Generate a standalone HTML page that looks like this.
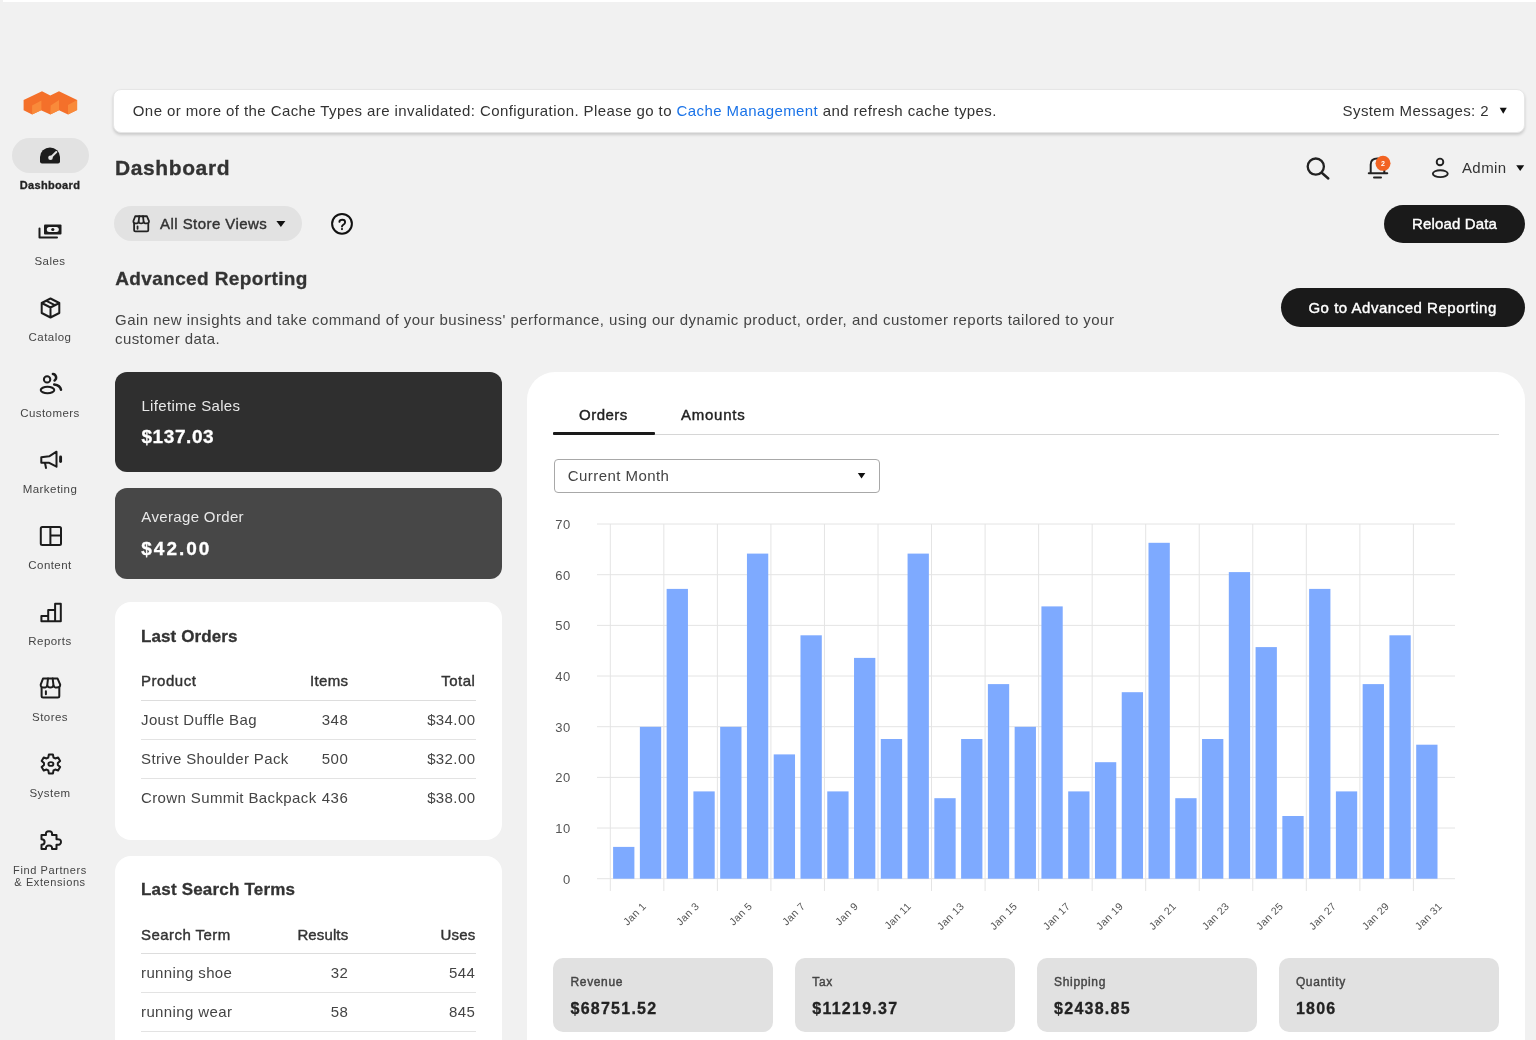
<!DOCTYPE html>
<html><head><meta charset="utf-8"><title>Dashboard</title>
<style>
html,body{margin:0;padding:0;}
body{width:1536px;height:1040px;overflow:hidden;position:relative;background:#f1f1f1;font-family:"Liberation Sans", sans-serif;}
.t{position:absolute;white-space:nowrap;}
#w{position:absolute;left:0;top:0;width:1536px;height:1040px;will-change:transform;}
.b{position:absolute;}
</style></head><body><div id="w">
<div class="b" style="left:3px;top:0px;width:1533px;height:2px;background:#ffffff;border-radius:0px;"></div>
<svg class="b" style="left:0px;top:0px;" width="100" height="130" viewBox="0 0 100 130">
<polygon fill="#f4702a" points="23.6,100.1 42,91.2 50.3,95.5 59,91.2 77.1,100.1 77.1,110 68,114.5 59,110.2 50.3,114.5 41,110.2 32.1,114.5 23.6,110.2"/>
<polygon fill="#f98a3a" points="32.1,105.4 41.4,100.5 41.4,110.2 32.1,114.5"/>
<polygon fill="#f98a3a" points="50.7,105.4 59,100.1 59,110.2 50.3,114.5"/>
<polygon fill="#f98a3a" points="68,105 77.1,100.1 77.1,110 68,114.5"/>
</svg>
<div class="b" style="left:12px;top:138px;width:77px;height:35px;background:#e2e2e2;border-radius:17.5px;"></div>
<svg class="b" style="left:0px;top:130px;" width="100" height="50" viewBox="0 0 100 50">
<path fill="#1c1c1c" d="M40,27 A10,9.5 0 0 1 60,27 L60,31.5 Q60,33.5 58,33.5 L42,33.5 Q40,33.5 40,31.5 Z"/>
<line x1="50.5" y1="27.8" x2="56.3" y2="22" stroke="#e2e2e2" stroke-width="2" stroke-linecap="round"/>
<circle cx="50.5" cy="27.8" r="2.3" fill="#e2e2e2"/>
</svg>
<div class="t" style="left:-250px;width:600px;text-align:center;top:179.69px;font-size:11px;line-height:11px;font-weight:700;color:#222;letter-spacing:0.33px;-webkit-text-stroke:0.3px #222;">Dashboard</div>
<div class="t" style="left:-250px;width:600px;text-align:center;top:256.07px;font-size:11.5px;line-height:11.5px;font-weight:400;color:#444;letter-spacing:0.45px;">Sales</div>
<div class="t" style="left:-250px;width:600px;text-align:center;top:332.07px;font-size:11.5px;line-height:11.5px;font-weight:400;color:#444;letter-spacing:0.45px;">Catalog</div>
<div class="t" style="left:-250px;width:600px;text-align:center;top:408.07px;font-size:11.5px;line-height:11.5px;font-weight:400;color:#444;letter-spacing:0.45px;">Customers</div>
<div class="t" style="left:-250px;width:600px;text-align:center;top:484.07px;font-size:11.5px;line-height:11.5px;font-weight:400;color:#444;letter-spacing:0.45px;">Marketing</div>
<div class="t" style="left:-250px;width:600px;text-align:center;top:560.07px;font-size:11.5px;line-height:11.5px;font-weight:400;color:#444;letter-spacing:0.45px;">Content</div>
<div class="t" style="left:-250px;width:600px;text-align:center;top:636.07px;font-size:11.5px;line-height:11.5px;font-weight:400;color:#444;letter-spacing:0.45px;">Reports</div>
<div class="t" style="left:-250px;width:600px;text-align:center;top:712.07px;font-size:11.5px;line-height:11.5px;font-weight:400;color:#444;letter-spacing:0.45px;">Stores</div>
<div class="t" style="left:-250px;width:600px;text-align:center;top:788.07px;font-size:11.5px;line-height:11.5px;font-weight:400;color:#444;letter-spacing:0.45px;">System</div>
<div class="t" style="left:-250px;width:600px;text-align:center;top:865.19px;font-size:11px;line-height:11px;font-weight:400;color:#444;letter-spacing:0.6px;">Find Partners</div>
<div class="t" style="left:-250px;width:600px;text-align:center;top:877.49px;font-size:11px;line-height:11px;font-weight:400;color:#444;letter-spacing:0.6px;">&amp; Extensions</div>
<svg class="b" style="left:30px;top:215px;" width="40" height="30" viewBox="0 0 40 30">
<rect x="14" y="9.5" width="17.5" height="10" rx="1" fill="#1c1c1c"/>
<rect x="16.8" y="12" width="12" height="5" rx="2.5" fill="#f1f1f1"/>
<circle cx="22.8" cy="14.5" r="1.6" fill="#1c1c1c"/>
<path d="M9.5,13.5 V22.5 H27" fill="none" stroke="#1c1c1c" stroke-width="2" stroke-linejoin="round" stroke-linecap="round"/>
</svg>
<svg class="b" style="left:30px;top:290px;" width="40" height="35" viewBox="0 0 40 35">
<path d="M20.5,8.5 L29.3,13 V23 L20.5,27.5 L11.7,23 V13 Z M11.7,13 L20.5,17.5 L29.3,13 M20.5,17.5 V27.5 M16,10.7 L24.8,15.2" fill="none" stroke="#1c1c1c" stroke-width="2" stroke-linejoin="round" stroke-linecap="round"/>
</svg>
<svg class="b" style="left:30px;top:360px;" width="40" height="40" viewBox="0 0 40 40">
<circle cx="17.1" cy="19.4" r="3.2" fill="none" stroke="#1c1c1c" stroke-width="2" stroke-linejoin="round" stroke-linecap="round"/>
<ellipse cx="17.5" cy="30" rx="6.8" ry="3.2" fill="none" stroke="#1c1c1c" stroke-width="2" stroke-linejoin="round" stroke-linecap="round"/>
<path d="M22.9,13.9 A3.6,3.6 0 0 1 24.6,20.4" fill="none" stroke="#1c1c1c" stroke-width="2.5" stroke-linecap="round"/>
<path d="M24.2,24.4 Q30.3,25.2 31,29.8" fill="none" stroke="#1c1c1c" stroke-width="2.5" stroke-linecap="round"/>
</svg>
<svg class="b" style="left:30px;top:440px;" width="40" height="35" viewBox="0 0 40 35">
<path d="M11.3,23.7 V29.3 H19.2 L26.5,33.2 V18.2 L19.2,22.8 Z" fill="none" stroke="#1c1c1c" stroke-width="2" stroke-linejoin="round" stroke-linecap="round" transform="translate(0,-6.5)"/>
<path d="M15,23 L16,28" fill="none" stroke="#1c1c1c" stroke-width="2" stroke-linejoin="round" stroke-linecap="round"/>
<path d="M30.6,16.9 V21.5" fill="none" stroke="#1c1c1c" stroke-width="2.9" stroke-linecap="round"/>
</svg>
<svg class="b" style="left:30px;top:515px;" width="40" height="40" viewBox="0 0 40 40">
<rect x="10.8" y="12" width="20.2" height="18" rx="1.5" fill="none" stroke="#1c1c1c" stroke-width="2" stroke-linejoin="round" stroke-linecap="round"/>
<path d="M20.4,12 V30 M20.4,20.5 H31" fill="none" stroke="#1c1c1c" stroke-width="2" stroke-linejoin="round" stroke-linecap="round"/>
</svg>
<svg class="b" style="left:30px;top:595px;" width="40" height="35" viewBox="0 0 40 35">
<path d="M11.4,26.3 V20.9 H18.2 V15.1 H25.1 V8.7 H30.8 V26.3 Z M18.2,20.9 V26.3 M25.1,15.1 V26.3" fill="none" stroke="#1c1c1c" stroke-width="2" stroke-linejoin="round" stroke-linecap="round"/>
</svg>
<svg class="b" style="left:30px;top:670px;" width="40" height="35" viewBox="0 0 40 35">
<path d="M13,8.6 H27.6 L30.2,14.6 Q30.4,17.6 26.9,17.6 Q23.9,17.6 23.5,15.6 Q23,17.6 20.35,17.6 Q17.7,17.6 17.2,15.6 Q16.8,17.6 13.8,17.6 Q10.5,17.6 10.7,14.6 Z" fill="none" stroke="#1c1c1c" stroke-width="2" stroke-linejoin="round" stroke-linecap="round"/>
<path d="M17.2,15.6 L18,8.6 M23.5,15.6 L22.7,8.6 M11.6,17.5 V26 Q11.6,27.5 13.1,27.5 H27.8 Q29.3,27.5 29.3,26 V17.5 M15.9,21.2 V24.3" fill="none" stroke="#1c1c1c" stroke-width="2" stroke-linejoin="round" stroke-linecap="round"/>
</svg>
<svg class="b" style="left:30px;top:745px;" width="40" height="40" viewBox="0 0 40 40"><g transform="translate(20.9,19)"><path fill="none" stroke="#1c1c1c" stroke-width="2" stroke-linejoin="round" d="M2.62,-6.49 L2.02,-9.49 L-2.02,-9.49 L-2.62,-6.49 L-4.31,-5.52 L-7.21,-6.49 L-9.23,-3.00 L-6.93,-0.97 L-6.93,0.97 L-9.23,3.00 L-7.21,6.49 L-4.31,5.52 L-2.62,6.49 L-2.02,9.49 L2.02,9.49 L2.62,6.49 L4.31,5.52 L7.21,6.49 L9.23,3.00 L6.93,0.97 L6.93,-0.97 L9.23,-3.00 L7.21,-6.49 L4.31,-5.52 Z"/><ellipse rx="2.5" ry="1.9" fill="none" stroke="#1c1c1c" stroke-width="1.9"/></g></svg>
<svg class="b" style="left:30px;top:820px;" width="40" height="40" viewBox="0 0 40 40">
<path d="M11.5,15 H16 Q15.3,11.2 19,11.2 Q22.7,11.2 22,15 H26.5 V19.3 Q31,18.8 31,22 Q31,25.2 26.5,24.7 V29 H22 Q22.5,25.5 19,25.5 Q15.5,25.5 16,29 H11.5 V24.7 Q14.6,24.7 14.6,22 Q14.6,19.3 11.5,19.3 Z" fill="none" stroke="#1c1c1c" stroke-width="2" stroke-linejoin="round" stroke-linecap="round"/>
</svg>
<div class="b" style="left:113px;top:88.5px;width:1412px;height:44px;background:#ffffff;border-radius:8px;box-shadow:0 2px 3px rgba(0,0,0,0.16);border:1px solid #e6e6e6;box-sizing:border-box;"></div>
<div class="t" style="left:132.8px;top:103.00px;font-size:15px;line-height:15px;font-weight:400;color:#333;letter-spacing:0.41px;">One or more of the Cache Types are invalidated: Configuration. Please go to <span style="color:#1a73e8">Cache Management</span> and refresh cache types.</div>
<div class="t" style="right:47px;text-align:right;top:102.90px;font-size:15px;line-height:15px;font-weight:400;color:#333;letter-spacing:0.4px;">System Messages: 2</div>
<svg class="b" style="left:1498px;top:105px;" width="12" height="12" viewBox="0 0 12 12"><polygon points="1.7,2.8 8.8,2.8 5.25,8.8" fill="#111"/></svg>
<div class="t" style="left:115px;top:157.22px;font-size:21px;line-height:21px;font-weight:700;color:#333;letter-spacing:0.6px;-webkit-text-stroke:0.3px #333;">Dashboard</div>
<svg class="b" style="left:1300px;top:150px;" width="36" height="36" viewBox="0 0 36 36"><circle cx="15.8" cy="16.6" r="8.1" fill="none" stroke="#222" stroke-width="2.3"/><path d="M22,23 L28.3,28.5" stroke="#222" stroke-width="2.4" stroke-linecap="round"/></svg>
<svg class="b" style="left:1360px;top:150px;" width="40" height="36" viewBox="0 0 40 36">
<path d="M10.7,23.2 V14.5 Q10.7,8.6 17.5,8.6 Q24.3,8.6 24.3,14.5 V23.2" fill="none" stroke="#222" stroke-width="2"/>
<path d="M8.8,23.2 H27.2" stroke="#222" stroke-width="2.1" stroke-linecap="round"/>
<path d="M14,27.4 H21" stroke="#222" stroke-width="2" stroke-linecap="round"/>
<circle cx="23" cy="13.35" r="7.5" fill="#f26322"/>
<text x="23" y="16" font-family="Liberation Sans" font-size="7" font-weight="700" fill="#fff" text-anchor="middle">2</text>
</svg>
<svg class="b" style="left:1420px;top:150px;" width="36" height="36" viewBox="0 0 36 36"><circle cx="20" cy="11.9" r="3.3" fill="none" stroke="#222" stroke-width="1.9"/><ellipse cx="20.3" cy="23.7" rx="7.45" ry="3.45" fill="none" stroke="#222" stroke-width="1.9"/></svg>
<div class="t" style="left:1461.9px;top:160.20px;font-size:15px;line-height:15px;font-weight:400;color:#333;letter-spacing:0.45px;">Admin</div>
<svg class="b" style="left:1512px;top:160px;" width="16" height="16" viewBox="0 0 16 16"><polygon points="4.2,5.3 12.2,5.3 8.2,11" fill="#111"/></svg>
<div class="b" style="left:114px;top:206px;width:188px;height:35px;background:#e2e2e2;border-radius:17.5px;"></div>
<svg class="b" style="left:128px;top:210px;" width="26" height="26" viewBox="0 0 26 26"><g transform="translate(-3.16,-0.63) scale(0.8)" fill="none" stroke="#222" stroke-width="2.25" stroke-linejoin="round" stroke-linecap="round">
<path d="M13,8.6 H27.6 L30.2,14.6 Q30.4,17.6 26.9,17.6 Q23.9,17.6 23.5,15.6 Q23,17.6 20.35,17.6 Q17.7,17.6 17.2,15.6 Q16.8,17.6 13.8,17.6 Q10.5,17.6 10.7,14.6 Z"/>
<path d="M17.2,15.6 L18,8.6 M23.5,15.6 L22.7,8.6 M11.6,17.5 V26 Q11.6,27.5 13.1,27.5 H27.8 Q29.3,27.5 29.3,26 V17.5 M15.9,21.2 V24.3"/></g>
</svg>
<div class="t" style="left:160.1px;top:216.30px;font-size:15px;line-height:15px;font-weight:400;color:#333;letter-spacing:0.43px;-webkit-text-stroke:0.4px #333;">All Store Views</div>
<svg class="b" style="left:272px;top:216px;" width="18" height="16" viewBox="0 0 18 16"><polygon points="4.4,4.9 13.4,4.9 8.9,11.1" fill="#111"/></svg>
<svg class="b" style="left:326px;top:209px;" width="32" height="30" viewBox="0 0 32 30"><circle cx="16" cy="14.8" r="9.9" fill="none" stroke="#111" stroke-width="2"/><path d="M13.4,12.8 Q13.6,10.8 16.4,10.8 Q19.1,10.8 19.1,13.2 Q19.1,14.6 17.3,15.8 Q16,16.7 16,17.6" fill="none" stroke="#111" stroke-width="1.9" stroke-linecap="round"/><circle cx="16" cy="20.1" r="1.05" fill="#111"/></svg>
<div class="b" style="left:1384px;top:204.5px;width:141px;height:38.5px;background:#1a1a1a;border-radius:19.25px;"></div>
<div class="t" style="left:1412px;top:216.40px;font-size:15px;line-height:15px;font-weight:400;color:#fff;letter-spacing:0.15px;-webkit-text-stroke:0.4px #fff;">Reload Data</div>
<div class="t" style="left:115.2px;top:268.82px;font-size:19px;line-height:19px;font-weight:700;color:#333;letter-spacing:0.38px;-webkit-text-stroke:0.3px #333;">Advanced Reporting</div>
<div class="t" style="left:115px;top:311.60px;font-size:15px;line-height:15px;font-weight:400;color:#444;letter-spacing:0.47px;">Gain new insights and take command of your business&#39; performance, using our dynamic product, order, and customer reports tailored to your</div>
<div class="t" style="left:115px;top:331.00px;font-size:15px;line-height:15px;font-weight:400;color:#444;letter-spacing:0.42px;">customer data.</div>
<div class="b" style="left:1281.3px;top:288.2px;width:243.5px;height:38.8px;background:#1a1a1a;border-radius:19.4px;"></div>
<div class="t" style="left:1308.4px;top:300.40px;font-size:15px;line-height:15px;font-weight:400;color:#fff;letter-spacing:0.52px;-webkit-text-stroke:0.4px #fff;">Go to Advanced Reporting</div>
<div class="b" style="left:114.5px;top:372px;width:387px;height:99.5px;background:#2f2f2f;border-radius:12px;"></div>
<div class="t" style="left:141.4px;top:397.70px;font-size:15px;line-height:15px;font-weight:400;color:#e8e8e8;letter-spacing:0.34px;">Lifetime Sales</div>
<div class="t" style="left:141.4px;top:427.22px;font-size:19px;line-height:19px;font-weight:700;color:#fff;letter-spacing:0.6px;-webkit-text-stroke:0.3px #fff;">$137.03</div>
<div class="b" style="left:114.5px;top:487.5px;width:387px;height:91.5px;background:#474747;border-radius:12px;"></div>
<div class="t" style="left:141.3px;top:508.60px;font-size:15px;line-height:15px;font-weight:400;color:#e8e8e8;letter-spacing:0.35px;">Average Order</div>
<div class="t" style="left:141.3px;top:538.52px;font-size:19px;line-height:19px;font-weight:700;color:#fff;letter-spacing:2.0px;-webkit-text-stroke:0.3px #fff;">$42.00</div>
<div class="b" style="left:114.5px;top:602.3px;width:387px;height:238px;background:#ffffff;border-radius:16px;"></div>
<div class="t" style="left:141px;top:627.61px;font-size:17px;line-height:17px;font-weight:700;color:#333;letter-spacing:0.1px;-webkit-text-stroke:0.3px #333;">Last Orders</div>
<div class="t" style="left:141px;top:673.00px;font-size:15px;line-height:15px;font-weight:400;color:#333;letter-spacing:0.54px;-webkit-text-stroke:0.4px #333;">Product</div>
<div class="t" style="right:1187.7px;text-align:right;top:673.00px;font-size:15px;line-height:15px;font-weight:400;color:#333;letter-spacing:0.32px;-webkit-text-stroke:0.4px #333;">Items</div>
<div class="t" style="right:1060.6px;text-align:right;top:673.00px;font-size:15px;line-height:15px;font-weight:400;color:#333;letter-spacing:0.48px;-webkit-text-stroke:0.4px #333;">Total</div>
<div class="b" style="left:141px;top:700px;width:334.5px;height:1px;background:#dddddd;border-radius:0px;"></div>
<div class="t" style="left:141px;top:712.10px;font-size:15px;line-height:15px;font-weight:400;color:#444;letter-spacing:0.38px;">Joust Duffle Bag</div>
<div class="t" style="right:1187.7px;text-align:right;top:712.10px;font-size:15px;line-height:15px;font-weight:400;color:#444;letter-spacing:0.5px;">348</div>
<div class="t" style="right:1060.6px;text-align:right;top:712.10px;font-size:15px;line-height:15px;font-weight:400;color:#444;letter-spacing:0.4px;">$34.00</div>
<div class="b" style="left:141px;top:739.0px;width:334.5px;height:1px;background:#e3e3e3;border-radius:0px;"></div>
<div class="t" style="left:141px;top:751.05px;font-size:15px;line-height:15px;font-weight:400;color:#444;letter-spacing:0.38px;">Strive Shoulder Pack</div>
<div class="t" style="right:1187.7px;text-align:right;top:751.05px;font-size:15px;line-height:15px;font-weight:400;color:#444;letter-spacing:0.5px;">500</div>
<div class="t" style="right:1060.6px;text-align:right;top:751.05px;font-size:15px;line-height:15px;font-weight:400;color:#444;letter-spacing:0.4px;">$32.00</div>
<div class="b" style="left:141px;top:777.9px;width:334.5px;height:1px;background:#e3e3e3;border-radius:0px;"></div>
<div class="t" style="left:141px;top:790.00px;font-size:15px;line-height:15px;font-weight:400;color:#444;letter-spacing:0.38px;">Crown Summit Backpack</div>
<div class="t" style="right:1187.7px;text-align:right;top:790.00px;font-size:15px;line-height:15px;font-weight:400;color:#444;letter-spacing:0.5px;">436</div>
<div class="t" style="right:1060.6px;text-align:right;top:790.00px;font-size:15px;line-height:15px;font-weight:400;color:#444;letter-spacing:0.4px;">$38.00</div>
<div class="b" style="left:114.5px;top:856px;width:387px;height:300px;background:#ffffff;border-radius:16px;"></div>
<div class="t" style="left:141px;top:881.11px;font-size:17px;line-height:17px;font-weight:700;color:#333;letter-spacing:0.2px;-webkit-text-stroke:0.3px #333;">Last Search Terms</div>
<div class="t" style="left:141px;top:927.10px;font-size:15px;line-height:15px;font-weight:400;color:#333;letter-spacing:0.45px;-webkit-text-stroke:0.4px #333;">Search Term</div>
<div class="t" style="right:1187.7px;text-align:right;top:927.10px;font-size:15px;line-height:15px;font-weight:400;color:#333;letter-spacing:0.13px;-webkit-text-stroke:0.4px #333;">Results</div>
<div class="t" style="right:1060.6px;text-align:right;top:927.10px;font-size:15px;line-height:15px;font-weight:400;color:#333;letter-spacing:0.2px;-webkit-text-stroke:0.4px #333;">Uses</div>
<div class="b" style="left:141px;top:953.3px;width:334.5px;height:1px;background:#dddddd;border-radius:0px;"></div>
<div class="t" style="left:141px;top:965.40px;font-size:15px;line-height:15px;font-weight:400;color:#444;letter-spacing:0.38px;">running shoe</div>
<div class="t" style="right:1187.7px;text-align:right;top:965.40px;font-size:15px;line-height:15px;font-weight:400;color:#444;letter-spacing:0.5px;">32</div>
<div class="t" style="right:1060.6px;text-align:right;top:965.40px;font-size:15px;line-height:15px;font-weight:400;color:#444;letter-spacing:0.5px;">544</div>
<div class="b" style="left:141px;top:992.3px;width:334.5px;height:1px;background:#e3e3e3;border-radius:0px;"></div>
<div class="t" style="left:141px;top:1004.20px;font-size:15px;line-height:15px;font-weight:400;color:#444;letter-spacing:0.38px;">running wear</div>
<div class="t" style="right:1187.7px;text-align:right;top:1004.20px;font-size:15px;line-height:15px;font-weight:400;color:#444;letter-spacing:0.5px;">58</div>
<div class="t" style="right:1060.6px;text-align:right;top:1004.20px;font-size:15px;line-height:15px;font-weight:400;color:#444;letter-spacing:0.5px;">845</div>
<div class="b" style="left:141px;top:1031.1px;width:334.5px;height:1px;background:#e3e3e3;border-radius:0px;"></div>
<div class="b" style="left:527px;top:372px;width:998px;height:700px;background:#ffffff;border-radius:28px;"></div>
<div class="t" style="left:579px;top:407.30px;font-size:15px;line-height:15px;font-weight:400;color:#222;letter-spacing:0.5px;-webkit-text-stroke:0.4px #222;">Orders</div>
<div class="t" style="left:681px;top:407.30px;font-size:15px;line-height:15px;font-weight:400;color:#222;letter-spacing:0.76px;-webkit-text-stroke:0.4px #222;">Amounts</div>
<div class="b" style="left:553.3px;top:433.5px;width:946px;height:1.2px;background:#d6d6d6;border-radius:0px;"></div>
<div class="b" style="left:553.3px;top:432.3px;width:101.5px;height:2.6px;background:#1a1a1a;border-radius:1px;"></div>
<div class="b" style="left:553.5px;top:458.5px;width:326px;height:34px;background:#fff;border-radius:4px;border:1px solid #a8a8a8;box-sizing:border-box;"></div>
<div class="t" style="left:567.8px;top:467.90px;font-size:15px;line-height:15px;font-weight:400;color:#444;letter-spacing:0.44px;">Current Month</div>
<svg class="b" style="left:852px;top:468px;" width="18" height="16" viewBox="0 0 18 16"><polygon points="5.8,4.9 13.3,4.9 9.55,10.4" fill="#111"/></svg>
<div class="t" style="right:965.5px;text-align:right;top:872.70px;font-size:13px;line-height:13px;font-weight:400;color:#555;letter-spacing:0.35px;">0</div>
<div class="t" style="right:965.5px;text-align:right;top:822.03px;font-size:13px;line-height:13px;font-weight:400;color:#555;letter-spacing:0.35px;">10</div>
<div class="t" style="right:965.5px;text-align:right;top:771.36px;font-size:13px;line-height:13px;font-weight:400;color:#555;letter-spacing:0.35px;">20</div>
<div class="t" style="right:965.5px;text-align:right;top:720.69px;font-size:13px;line-height:13px;font-weight:400;color:#555;letter-spacing:0.35px;">30</div>
<div class="t" style="right:965.5px;text-align:right;top:670.03px;font-size:13px;line-height:13px;font-weight:400;color:#555;letter-spacing:0.35px;">40</div>
<div class="t" style="right:965.5px;text-align:right;top:619.36px;font-size:13px;line-height:13px;font-weight:400;color:#555;letter-spacing:0.35px;">50</div>
<div class="t" style="right:965.5px;text-align:right;top:568.69px;font-size:13px;line-height:13px;font-weight:400;color:#555;letter-spacing:0.35px;">60</div>
<div class="t" style="right:965.5px;text-align:right;top:518.03px;font-size:13px;line-height:13px;font-weight:400;color:#555;letter-spacing:0.35px;">70</div>
<svg class="b" style="left:0px;top:0px;pointer-events:none;" width="1536" height="1040" viewBox="0 0 1536 1040"><line x1="597" y1="878.70" x2="1455" y2="878.70" stroke="#e4e4e4" stroke-width="1"/><line x1="597" y1="828.03" x2="1455" y2="828.03" stroke="#e4e4e4" stroke-width="1"/><line x1="597" y1="777.37" x2="1455" y2="777.37" stroke="#e4e4e4" stroke-width="1"/><line x1="597" y1="726.70" x2="1455" y2="726.70" stroke="#e4e4e4" stroke-width="1"/><line x1="597" y1="676.03" x2="1455" y2="676.03" stroke="#e4e4e4" stroke-width="1"/><line x1="597" y1="625.37" x2="1455" y2="625.37" stroke="#e4e4e4" stroke-width="1"/><line x1="597" y1="574.70" x2="1455" y2="574.70" stroke="#e4e4e4" stroke-width="1"/><line x1="597" y1="524.03" x2="1455" y2="524.03" stroke="#e4e4e4" stroke-width="1"/><line x1="610.30" y1="524" x2="610.30" y2="891" stroke="#e4e4e4" stroke-width="1"/><line x1="663.84" y1="524" x2="663.84" y2="891" stroke="#e4e4e4" stroke-width="1"/><line x1="717.38" y1="524" x2="717.38" y2="891" stroke="#e4e4e4" stroke-width="1"/><line x1="770.92" y1="524" x2="770.92" y2="891" stroke="#e4e4e4" stroke-width="1"/><line x1="824.46" y1="524" x2="824.46" y2="891" stroke="#e4e4e4" stroke-width="1"/><line x1="878.00" y1="524" x2="878.00" y2="891" stroke="#e4e4e4" stroke-width="1"/><line x1="931.54" y1="524" x2="931.54" y2="891" stroke="#e4e4e4" stroke-width="1"/><line x1="985.08" y1="524" x2="985.08" y2="891" stroke="#e4e4e4" stroke-width="1"/><line x1="1038.62" y1="524" x2="1038.62" y2="891" stroke="#e4e4e4" stroke-width="1"/><line x1="1092.16" y1="524" x2="1092.16" y2="891" stroke="#e4e4e4" stroke-width="1"/><line x1="1145.70" y1="524" x2="1145.70" y2="891" stroke="#e4e4e4" stroke-width="1"/><line x1="1199.24" y1="524" x2="1199.24" y2="891" stroke="#e4e4e4" stroke-width="1"/><line x1="1252.78" y1="524" x2="1252.78" y2="891" stroke="#e4e4e4" stroke-width="1"/><line x1="1306.32" y1="524" x2="1306.32" y2="891" stroke="#e4e4e4" stroke-width="1"/><line x1="1359.86" y1="524" x2="1359.86" y2="891" stroke="#e4e4e4" stroke-width="1"/><line x1="1413.40" y1="524" x2="1413.40" y2="891" stroke="#e4e4e4" stroke-width="1"/><rect x="613.10" y="846.9" width="21.3" height="31.80" fill="#7eaaff"/><rect x="639.87" y="726.8" width="21.3" height="151.90" fill="#7eaaff"/><rect x="666.64" y="588.9" width="21.3" height="289.80" fill="#7eaaff"/><rect x="693.41" y="791.4" width="21.3" height="87.30" fill="#7eaaff"/><rect x="720.18" y="726.8" width="21.3" height="151.90" fill="#7eaaff"/><rect x="746.95" y="553.6" width="21.3" height="325.10" fill="#7eaaff"/><rect x="773.72" y="754.4" width="21.3" height="124.30" fill="#7eaaff"/><rect x="800.49" y="635.3" width="21.3" height="243.40" fill="#7eaaff"/><rect x="827.26" y="791.4" width="21.3" height="87.30" fill="#7eaaff"/><rect x="854.03" y="657.9" width="21.3" height="220.80" fill="#7eaaff"/><rect x="880.80" y="739" width="21.3" height="139.70" fill="#7eaaff"/><rect x="907.57" y="553.6" width="21.3" height="325.10" fill="#7eaaff"/><rect x="934.34" y="798.2" width="21.3" height="80.50" fill="#7eaaff"/><rect x="961.11" y="739" width="21.3" height="139.70" fill="#7eaaff"/><rect x="987.88" y="684.1" width="21.3" height="194.60" fill="#7eaaff"/><rect x="1014.65" y="726.8" width="21.3" height="151.90" fill="#7eaaff"/><rect x="1041.42" y="606.4" width="21.3" height="272.30" fill="#7eaaff"/><rect x="1068.19" y="791.4" width="21.3" height="87.30" fill="#7eaaff"/><rect x="1094.96" y="762.2" width="21.3" height="116.50" fill="#7eaaff"/><rect x="1121.73" y="692.2" width="21.3" height="186.50" fill="#7eaaff"/><rect x="1148.50" y="542.8" width="21.3" height="335.90" fill="#7eaaff"/><rect x="1175.27" y="798.2" width="21.3" height="80.50" fill="#7eaaff"/><rect x="1202.04" y="739" width="21.3" height="139.70" fill="#7eaaff"/><rect x="1228.81" y="572.1" width="21.3" height="306.60" fill="#7eaaff"/><rect x="1255.58" y="647.1" width="21.3" height="231.60" fill="#7eaaff"/><rect x="1282.35" y="816" width="21.3" height="62.70" fill="#7eaaff"/><rect x="1309.12" y="588.9" width="21.3" height="289.80" fill="#7eaaff"/><rect x="1335.89" y="791.4" width="21.3" height="87.30" fill="#7eaaff"/><rect x="1362.66" y="684.1" width="21.3" height="194.60" fill="#7eaaff"/><rect x="1389.43" y="635.3" width="21.3" height="243.40" fill="#7eaaff"/><rect x="1416.20" y="744.7" width="21.3" height="134.00" fill="#7eaaff"/></svg>
<div class="t" style="left:583.70px;top:898.00px;width:60px;text-align:right;font-size:10.5px;line-height:12px;color:#555;letter-spacing:0.3px;transform-origin:100% 50%;transform:rotate(-45deg);">Jan 1</div>
<div class="t" style="left:636.77px;top:898.00px;width:60px;text-align:right;font-size:10.5px;line-height:12px;color:#555;letter-spacing:0.3px;transform-origin:100% 50%;transform:rotate(-45deg);">Jan 3</div>
<div class="t" style="left:689.84px;top:898.00px;width:60px;text-align:right;font-size:10.5px;line-height:12px;color:#555;letter-spacing:0.3px;transform-origin:100% 50%;transform:rotate(-45deg);">Jan 5</div>
<div class="t" style="left:742.91px;top:898.00px;width:60px;text-align:right;font-size:10.5px;line-height:12px;color:#555;letter-spacing:0.3px;transform-origin:100% 50%;transform:rotate(-45deg);">Jan 7</div>
<div class="t" style="left:795.98px;top:898.00px;width:60px;text-align:right;font-size:10.5px;line-height:12px;color:#555;letter-spacing:0.3px;transform-origin:100% 50%;transform:rotate(-45deg);">Jan 9</div>
<div class="t" style="left:849.05px;top:898.00px;width:60px;text-align:right;font-size:10.5px;line-height:12px;color:#555;letter-spacing:0.3px;transform-origin:100% 50%;transform:rotate(-45deg);">Jan 11</div>
<div class="t" style="left:902.12px;top:898.00px;width:60px;text-align:right;font-size:10.5px;line-height:12px;color:#555;letter-spacing:0.3px;transform-origin:100% 50%;transform:rotate(-45deg);">Jan 13</div>
<div class="t" style="left:955.19px;top:898.00px;width:60px;text-align:right;font-size:10.5px;line-height:12px;color:#555;letter-spacing:0.3px;transform-origin:100% 50%;transform:rotate(-45deg);">Jan 15</div>
<div class="t" style="left:1008.26px;top:898.00px;width:60px;text-align:right;font-size:10.5px;line-height:12px;color:#555;letter-spacing:0.3px;transform-origin:100% 50%;transform:rotate(-45deg);">Jan 17</div>
<div class="t" style="left:1061.33px;top:898.00px;width:60px;text-align:right;font-size:10.5px;line-height:12px;color:#555;letter-spacing:0.3px;transform-origin:100% 50%;transform:rotate(-45deg);">Jan 19</div>
<div class="t" style="left:1114.40px;top:898.00px;width:60px;text-align:right;font-size:10.5px;line-height:12px;color:#555;letter-spacing:0.3px;transform-origin:100% 50%;transform:rotate(-45deg);">Jan 21</div>
<div class="t" style="left:1167.47px;top:898.00px;width:60px;text-align:right;font-size:10.5px;line-height:12px;color:#555;letter-spacing:0.3px;transform-origin:100% 50%;transform:rotate(-45deg);">Jan 23</div>
<div class="t" style="left:1220.54px;top:898.00px;width:60px;text-align:right;font-size:10.5px;line-height:12px;color:#555;letter-spacing:0.3px;transform-origin:100% 50%;transform:rotate(-45deg);">Jan 25</div>
<div class="t" style="left:1273.61px;top:898.00px;width:60px;text-align:right;font-size:10.5px;line-height:12px;color:#555;letter-spacing:0.3px;transform-origin:100% 50%;transform:rotate(-45deg);">Jan 27</div>
<div class="t" style="left:1326.68px;top:898.00px;width:60px;text-align:right;font-size:10.5px;line-height:12px;color:#555;letter-spacing:0.3px;transform-origin:100% 50%;transform:rotate(-45deg);">Jan 29</div>
<div class="t" style="left:1379.75px;top:898.00px;width:60px;text-align:right;font-size:10.5px;line-height:12px;color:#555;letter-spacing:0.3px;transform-origin:100% 50%;transform:rotate(-45deg);">Jan 31</div>
<div class="b" style="left:553.2px;top:957.5px;width:220px;height:74.2px;background:#e1e1e1;border-radius:10px;"></div>
<div class="t" style="left:570.5px;top:976.34px;font-size:12px;line-height:12px;font-weight:400;color:#444;letter-spacing:0.65px;-webkit-text-stroke:0.4px #444;">Revenue</div>
<div class="t" style="left:570.5px;top:1000.66px;font-size:16px;line-height:16px;font-weight:700;color:#222;letter-spacing:1.25px;-webkit-text-stroke:0.3px #222;">$68751.52</div>
<div class="b" style="left:795.0px;top:957.5px;width:220px;height:74.2px;background:#e1e1e1;border-radius:10px;"></div>
<div class="t" style="left:812.3px;top:976.34px;font-size:12px;line-height:12px;font-weight:400;color:#444;letter-spacing:0.65px;-webkit-text-stroke:0.4px #444;">Tax</div>
<div class="t" style="left:812.3px;top:1000.66px;font-size:16px;line-height:16px;font-weight:700;color:#222;letter-spacing:1.25px;-webkit-text-stroke:0.3px #222;">$11219.37</div>
<div class="b" style="left:1036.8000000000002px;top:957.5px;width:220px;height:74.2px;background:#e1e1e1;border-radius:10px;"></div>
<div class="t" style="left:1054.1000000000001px;top:976.34px;font-size:12px;line-height:12px;font-weight:400;color:#444;letter-spacing:0.65px;-webkit-text-stroke:0.4px #444;">Shipping</div>
<div class="t" style="left:1054.1000000000001px;top:1000.66px;font-size:16px;line-height:16px;font-weight:700;color:#222;letter-spacing:1.25px;-webkit-text-stroke:0.3px #222;">$2438.85</div>
<div class="b" style="left:1278.6000000000001px;top:957.5px;width:220px;height:74.2px;background:#e1e1e1;border-radius:10px;"></div>
<div class="t" style="left:1295.9px;top:976.34px;font-size:12px;line-height:12px;font-weight:400;color:#444;letter-spacing:0.65px;-webkit-text-stroke:0.4px #444;">Quantity</div>
<div class="t" style="left:1295.9px;top:1000.66px;font-size:16px;line-height:16px;font-weight:700;color:#222;letter-spacing:1.25px;-webkit-text-stroke:0.3px #222;">1806</div>
</div></body></html>
